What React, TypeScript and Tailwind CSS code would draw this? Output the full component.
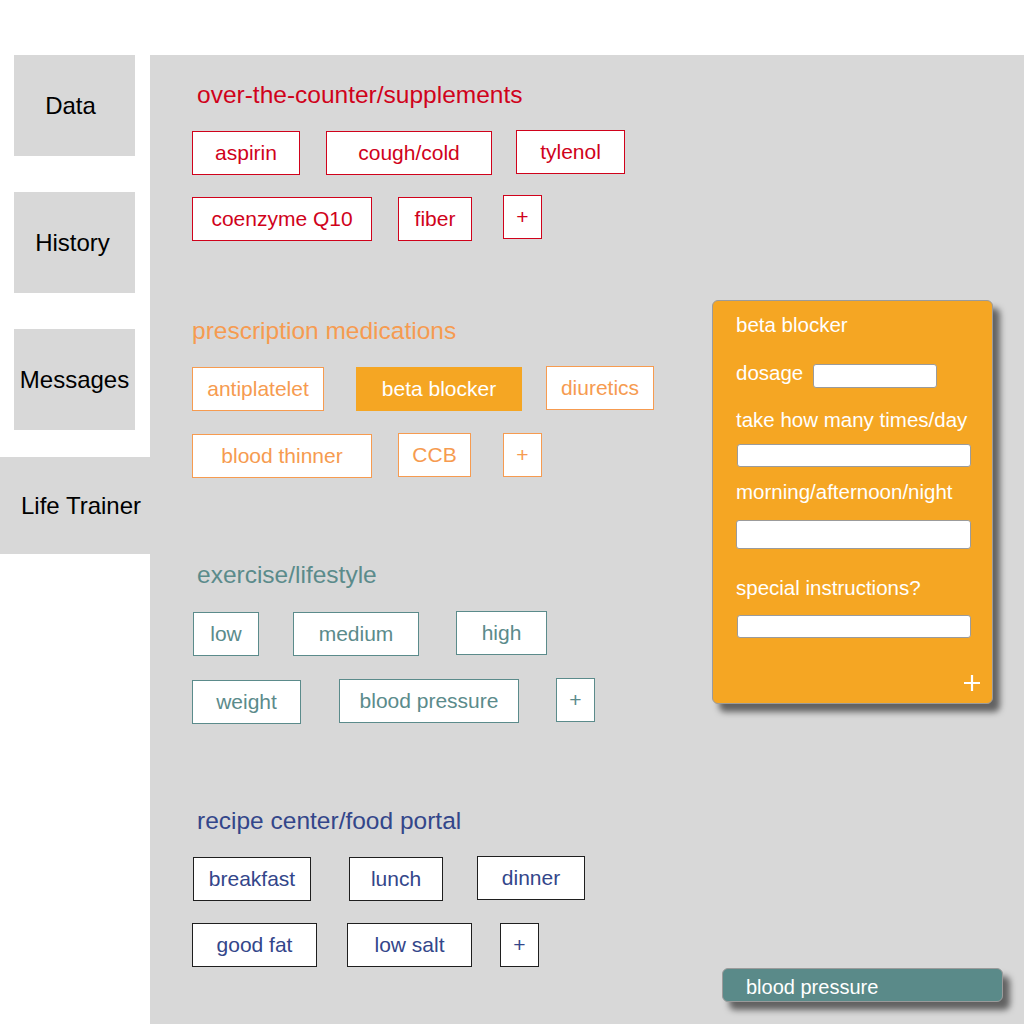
import React from 'react'

type Chip = { label: string; cls: string; active?: boolean }

type Section = {
  title: string
  titleCls: string
  chipCls: string
  rowCls: string[]
  rows: Chip[][]
}

const SECTIONS: Section[] = [
  {
    title: 'over-the-counter/supplements',
    titleCls: 'text-[#d0021b] ml-[47px] mt-[26px]',
    chipCls: 'border-[#d0021b] text-[#d0021b] bg-white',
    rowCls: ['mt-[22px]', 'mt-[22px]'],
    rows: [
      [
        { label: 'aspirin', cls: 'w-[108px]' },
        { label: 'cough/cold', cls: 'w-[166px] ml-[26px]' },
        { label: 'tylenol', cls: 'w-[109px] ml-[24px] -mt-px' },
      ],
      [
        { label: 'coenzyme Q10', cls: 'w-[180px]' },
        { label: 'fiber', cls: 'w-[74px] ml-[26px]' },
        { label: '+', cls: 'w-[39px] ml-[31px] -mt-[2px]' },
      ],
    ],
  },
  {
    title: 'prescription medications',
    titleCls: 'text-[#f69b50] ml-[42px] mt-[76px]',
    chipCls: 'border-[#f69b50] text-[#f69b50] bg-white',
    rowCls: ['mt-[22px]', 'mt-[23px]'],
    rows: [
      [
        { label: 'antiplatelet', cls: 'w-[132px]' },
        { label: 'beta blocker', cls: 'w-[166px] ml-[32px]', active: true },
        { label: 'diuretics', cls: 'w-[108px] ml-[24px] -mt-px' },
      ],
      [
        { label: 'blood thinner', cls: 'w-[180px]' },
        { label: 'CCB', cls: 'w-[73px] ml-[26px] -mt-px' },
        { label: '+', cls: 'w-[39px] ml-[32px] -mt-px' },
      ],
    ],
  },
  {
    title: 'exercise/lifestyle',
    titleCls: 'text-[#5b8b8b] ml-[47px] mt-[83px]',
    chipCls: 'border-[#5b8b8b] text-[#5b8b8b] bg-white',
    rowCls: ['mt-[23px]', 'mt-[24px]'],
    rows: [
      [
        { label: 'low', cls: 'w-[66px] ml-px' },
        { label: 'medium', cls: 'w-[126px] ml-[34px]' },
        { label: 'high', cls: 'w-[91px] ml-[37px] -mt-px' },
      ],
      [
        { label: 'weight', cls: 'w-[109px]' },
        { label: 'blood pressure', cls: 'w-[180px] ml-[38px] -mt-px' },
        { label: '+', cls: 'w-[39px] ml-[37px] -mt-[2px]' },
      ],
    ],
  },
  {
    title: 'recipe center/food portal',
    titleCls: 'text-[#33468a] ml-[47px] mt-[83px]',
    chipCls: 'border-[#1f1f1f] text-[#33468a] bg-white',
    rowCls: ['mt-[22px]', 'mt-[22px]'],
    rows: [
      [
        { label: 'breakfast', cls: 'w-[118px] ml-px' },
        { label: 'lunch', cls: 'w-[94px] ml-[38px]' },
        { label: 'dinner', cls: 'w-[108px] ml-[34px] -mt-px' },
      ],
      [
        { label: 'good fat', cls: 'w-[125px]' },
        { label: 'low salt', cls: 'w-[125px] ml-[30px]' },
        { label: '+', cls: 'w-[39px] ml-[28px]' },
      ],
    ],
  },
]

const TABS = [
  { label: 'Data', cls: 'mt-0 pr-[8px]' },
  { label: 'History', cls: 'mt-[36px] pr-[4px]' },
  { label: 'Messages', cls: 'mt-[36px]' },
]

function ChipBox({ chip, base }: { chip: Chip; base: string }) {
  const look = chip.active ? 'bg-[#f5a623] border-[#f5a623] text-white' : base
  return (
    <div className={`h-[44px] shrink-0 border flex items-center justify-center text-[21px] leading-6 ${look} ${chip.cls}`}>
      {chip.label}
    </div>
  )
}

function Field({ cls }: { cls: string }) {
  return <div className={`bg-white border border-[#9b9b9b] rounded-[3px] ${cls}`} />
}

export default function App() {
  return (
    <div className="relative h-[1024px] overflow-hidden bg-white pt-[55px] flex font-['Liberation_Sans',Arial,sans-serif]">
      <div className="w-[150px] shrink-0 flex flex-col">
        {TABS.map((t) => (
          <div
            key={t.label}
            className={`ml-[14px] w-[121px] h-[101px] bg-[#d8d8d8] flex items-center justify-center text-[24px] text-black ${t.cls}`}
          >
            {t.label}
          </div>
        ))}
        <div className="mt-[27px] w-[150px] h-[97px] bg-[#d8d8d8] flex items-center pl-[21px] text-[24px] text-black">
          Life Trainer
        </div>
      </div>

      <div className="flex-1 bg-[#d8d8d8] flex flex-col">
        {SECTIONS.map((s) => (
          <div key={s.title} className="flex flex-col">
            <h2 className={`text-[24.5px] leading-[28px] ${s.titleCls}`}>{s.title}</h2>
            {s.rows.map((row, ri) => (
              <div key={ri} className={`flex items-start ml-[42px] ${s.rowCls[ri]}`}>
                {row.map((c) => (
                  <ChipBox key={c.label} chip={c} base={s.chipCls} />
                ))}
              </div>
            ))}
          </div>
        ))}
      </div>

      {/* detail popover for the selected medication */}
      <div className="absolute left-[712px] top-[300px] w-[281px] h-[404px] bg-[#f5a623] border border-[#9b9b9b] rounded-md shadow-[7px_8px_6px_rgba(0,0,0,0.55)] pt-[12px] pl-[23px] text-white text-[20.5px] leading-6 flex flex-col">
        <div>beta blocker</div>
        <div className="mt-[24px] flex items-start">
          <span>dosage</span>
          <Field cls="ml-[10px] mt-[3px] w-[124px] h-[24px]" />
        </div>
        <div className="mt-[20px]">take how many times/day</div>
        <Field cls="mt-[12px] ml-px w-[234px] h-[23px]" />
        <div className="mt-[13px]">morning/afternoon/night</div>
        <Field cls="mt-[16px] w-[235px] h-[29px]" />
        <div className="mt-[27px]">special instructions?</div>
        <Field cls="mt-[15px] ml-px w-[234px] h-[23px]" />
        <svg className="absolute right-[11px] bottom-[11px]" width="18" height="18" viewBox="0 0 18 18">
          <path d="M9 1v16M1 9h16" stroke="white" strokeWidth="2.2" />
        </svg>
      </div>

      <div className="absolute left-[722px] top-[968px] w-[281px] h-[34px] bg-[#5a8a89] border border-[#9b9b9b] rounded-md shadow-[7px_8px_6px_rgba(0,0,0,0.55)] flex items-center pl-[23px] pt-[3px] text-white text-[20px]">
        blood pressure
      </div>
    </div>
  )
}
